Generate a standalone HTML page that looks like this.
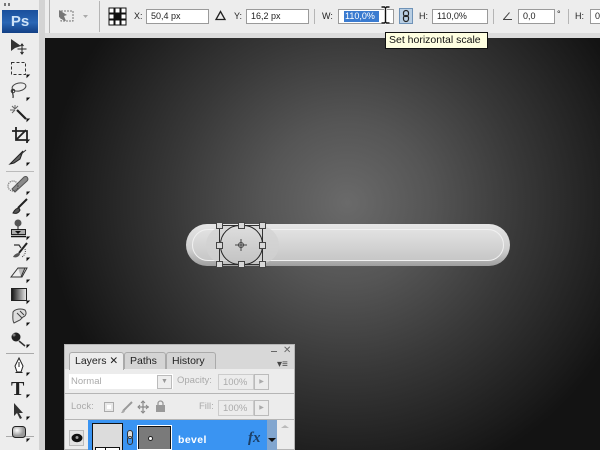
<!DOCTYPE html>
<html><head><meta charset="utf-8"><style>
html,body{margin:0;padding:0}
body{width:600px;height:450px;position:relative;overflow:hidden;background:#ececec;font-family:"Liberation Sans",sans-serif;font-size:9px;color:#222}
div,span{position:absolute;box-sizing:border-box}
svg{position:absolute;left:0;top:0}
.t{white-space:nowrap;line-height:12px}
.in{background:#fff;border:1px solid #9a9a9a;height:15px;top:9px;font-size:9px;line-height:13px;padding-left:4px;color:#222}
.sep{width:1px;background:#b5b5b5}
</style></head><body>
<!-- canvas -->
<div style="left:45px;top:38px;width:555px;height:412px;background:radial-gradient(ellipse 300px 290px at 302px 165px,#6a6a6a 0%,#555 28%,#383838 58%,#1c1c1c 90%,#131313 100%)"></div>
<!-- top bar -->
<div style="left:0;top:33px;width:600px;height:5px;background:#dcdcdc"></div>
<div style="left:39px;top:0;width:6px;height:450px;background:#d3d3d3"></div>
<div style="left:0;top:0;width:39px;height:450px;background:#ededed"></div>
<div style="left:45px;top:0;width:555px;height:33px;background:#ededed"></div>
<div class="sep" style="left:49px;top:0;height:33px"></div>
<div class="sep" style="left:99px;top:1px;height:31px"></div>
<div style="left:4px;top:3px;width:6px;height:3px;border-left:2px solid #777;border-right:2px solid #777"></div>
<!-- Ps logo -->
<div style="left:2px;top:10px;width:36px;height:23px;background:linear-gradient(#1a4f9c,#2a66b4 55%,#123f85);color:#cfe3f7;font-weight:bold;font-size:15px;line-height:23px;text-align:center">Ps</div>
<svg width="600" height="450" viewBox="0 0 600 450">
<!-- preset icon -->
<rect x="61" y="11" width="12" height="10" fill="none" stroke="#777" stroke-dasharray="2 1"/>
<path d="M59 10l8 5-3 1 2 5-3-1-4-3z" fill="#777"/>
<path d="M83 15l5 0-2.500 3z" fill="#aaa"/>
<!-- reference grid -->
<g fill="#fff" stroke="#111"><rect x="109" y="8" width="5" height="5"/><rect x="115" y="8" width="5" height="5"/><rect x="121" y="8" width="5" height="5"/><rect x="109" y="14" width="5" height="5"/><rect x="121" y="14" width="5" height="5"/><rect x="109" y="20" width="5" height="5"/><rect x="115" y="20" width="5" height="5"/><rect x="121" y="20" width="5" height="5"/><rect x="115" y="14" width="5" height="5" fill="#111"/></g>
<path d="M216 19.500h9l-4.500-8z" fill="none" stroke="#222" stroke-width="1.300"/>
<path d="M503 19.500h9M503.500 19.500l6-7" fill="none" stroke="#444" stroke-width="1"/>
<!-- link -->
<rect x="399.500" y="8.500" width="13" height="15" fill="#b9cfe4" stroke="#6f93b8"/>
<rect x="403.500" y="10.500" width="5" height="6" rx="2.500" fill="none" stroke="#222" stroke-width="1.200"/>
<rect x="403.500" y="15.500" width="5" height="6" rx="2.500" fill="none" stroke="#222" stroke-width="1.200"/>
<!-- tools -->
<g>
<path d="M11 39l0 12 4-3 6-2z" fill="#333"/>
<path d="M22 44v10M17.500 49h9M20.500 46l1.500-2 1.500 2M20.500 52l1.500 2 1.500-2" fill="none" stroke="#222"/>
<rect x="11.500" y="62.500" width="14" height="12" fill="none" stroke="#333" stroke-dasharray="3 2"/>
<path d="M29 75h-2v2zM29 98h-2v2zM29 119h-2v2zM29 140h-2v2zM29 163h-2v2zM29 192h-2v2zM29 214h-2v2zM29 237h-2v2zM29 258h-2v2zM29 280h-2v2zM29 301h-2v2zM29 323h-2v2zM29 345h-2v2zM29 373h-2v2zM29 395h-2v2zM29 417h-2v2zM29 439h-2v2z" fill="#111" stroke="#111"/>
<ellipse cx="19" cy="87" rx="7" ry="4" fill="none" stroke="#444" transform="rotate(-12 19 87)"/>
<path d="M13 89c-2 3 1 5 0 9" fill="none" stroke="#333" stroke-width="1.200"/>
<circle cx="13" cy="91" r="1.800" fill="none" stroke="#333"/>
<path d="M12 106l3 3M12 113l3-3M18 106l-3 3M10 110h5M15 105v4" stroke="#666"/>
<path d="M17 110l9 9" stroke="#222" stroke-width="2.200"/>
<path d="M12 131h15v12M16 127v13h11M16 140l10-10" fill="none" stroke="#222" stroke-width="1.800"/>
<path d="M10 164l13-13-3 8-6 4z" fill="#666" stroke="#222"/><path d="M20 155l6-5" stroke="#333"/>
<!-- divider -->
<path d="M6 171.500h28" stroke="#bbb"/>
<!-- heal -->
<path d="M12 189l12-12c3-2 5 2 3 4l-12 11z" fill="#8a8a8a" stroke="#555"/>
<circle cx="13" cy="186" r="5" fill="none" stroke="#444" stroke-dasharray="1 1"/>
<!-- brush -->
<path d="M27 199l-9 9" stroke="#222" stroke-width="2"/><path d="M19 208c-3 0-5 3-6 5 3 1 6 0 7-3z" fill="#555" stroke="#222"/>
<!-- stamp -->
<circle cx="18" cy="223" r="3.500" fill="#555"/><path d="M18 226v3M11.500 229.500h14v5h-14z" fill="#aaa" stroke="#222"/><path d="M15 231l3 3 3-3z" fill="#111"/><path d="M11 236.500h15" stroke="#111" stroke-width="1.500"/>
<!-- history brush -->
<path d="M27 243l-8 10" stroke="#222" stroke-width="2"/><path d="M19 253c-3 0-5 2-6 4 3 1 6 0 7-3z" fill="#555"/><path d="M14 245h5l2 3" fill="none" stroke="#333" stroke-width="1.200"/><path d="M25 249c1 3 0 6-3 8" fill="none" stroke="#444" stroke-dasharray="1 1"/>
<!-- eraser -->
<path d="M11 277l7-9h9l-5 9z" fill="#eee" stroke="#333"/><path d="M18 268l7 0-4 9" fill="#bbb" stroke="#333"/>
<!-- gradient -->
<defs><linearGradient id="g"><stop offset="0" stop-color="#111"/><stop offset="1" stop-color="#eee"/></linearGradient>
<radialGradient id="s" cx=".35" cy=".35"><stop offset="0" stop-color="#fff"/><stop offset="1" stop-color="#999"/></radialGradient></defs>
<rect x="11.500" y="288.500" width="15" height="12" fill="url(#g)" stroke="#222"/>
<!-- smudge -->
<path d="M13 312c2-3 8-4 12-2 2 3 1 6-2 7l-3 3-6 3c-2-3-1-7-1-11z" fill="#ddd" stroke="#444"/><path d="M17 313l5 5M20 311l4 4" stroke="#444"/>
<!-- sponge -->
<circle cx="16" cy="337" r="4.500" fill="#222"/><circle cx="14" cy="335" r="1.500" fill="#777"/><path d="M19 341l6 5" stroke="#333" stroke-width="1.500"/>
<path d="M6 353.500h28" stroke="#aaa"/>
<!-- pen -->
<path d="M19 358l4 8-2 6h-4l-2-6z" fill="#fff" stroke="#222"/><path d="M19 362v5M15.500 372.500h7" fill="none" stroke="#222"/>
<path d="M6 436.500h28" stroke="#aaa"/>
<!-- arrow -->
<path d="M14 403l0 13 3-3 3 6 2-1-3-5 4 0z" fill="#333"/>
<!-- shape -->
<rect x="12.500" y="426.500" width="13" height="11" rx="3" fill="url(#s)" stroke="#222"/>
</g>
<!-- bar -->
<defs><linearGradient id="b1" x1="0" y1="0" x2="0" y2="1"><stop offset="0" stop-color="#e6e6e6"/><stop offset=".6" stop-color="#cfcfcf"/><stop offset="1" stop-color="#9f9f9f"/></linearGradient>
<linearGradient id="b2" x1="0" y1="0" x2="0" y2="1"><stop offset="0" stop-color="#e2e2e2"/><stop offset="1" stop-color="#c6c6c6"/></linearGradient>
<linearGradient id="b3" x1="0" y1="0" x2="0" y2="1"><stop offset="0" stop-color="#dedede"/><stop offset="1" stop-color="#c2c2c2"/></linearGradient></defs>
<rect x="186" y="224" width="324" height="42" rx="21" fill="url(#b1)"/>
<rect x="192.500" y="229.500" width="311" height="31" rx="15.500" fill="url(#b2)" stroke="#f1f1f1" stroke-width="1"/>
<rect x="206" y="226" width="73" height="38" rx="19" fill="#d2d2d2" opacity=".7"/>
<!-- transform -->
<rect x="219.500" y="225.500" width="43" height="39" fill="none" stroke="#333"/>
<rect x="220.500" y="225.500" width="42" height="39" rx="19" fill="url(#b3)" stroke="#222" stroke-width="1"/>
<g fill="#d8d8d8" stroke="#444"><rect x="216.500" y="222.500" width="6" height="6"/><rect x="238.500" y="222.500" width="6" height="6"/><rect x="259.500" y="222.500" width="6" height="6"/><rect x="216.500" y="242.500" width="6" height="6"/><rect x="259.500" y="242.500" width="6" height="6"/><rect x="216.500" y="261.500" width="6" height="6"/><rect x="238.500" y="261.500" width="6" height="6"/><rect x="259.500" y="261.500" width="6" height="6"/></g>
<circle cx="241" cy="245" r="2.500" fill="none" stroke="#444"/><path d="M235 245h12M241 239v12" stroke="#444"/>
</svg>
<div style="left:11px;top:380px;font-family:'Liberation Serif',serif;font-weight:bold;font-size:20px;line-height:18px;color:#222">T</div>
<!-- toolbar text -->
<div class="t" style="left:134px;top:10px">X:</div>
<div class="in" style="left:146px;top:9px;width:63px">50,4 px</div>
<div class="t" style="left:234px;top:10px">Y:</div>
<div class="in" style="left:246px;top:9px;width:63px">16,2 px</div>
<div class="sep" style="left:314px;top:9px;height:15px"></div>
<div class="t" style="left:322px;top:10px">W:</div>
<div class="in" style="left:338px;top:9px;width:56px"></div>
<div style="left:344px;top:11px;width:35px;height:11px;background:#3a7bd0;color:#fff;font-size:9px;line-height:11px;padding-left:1px">110,0%</div>
<div class="t" style="left:419px;top:10px">H:</div>
<div class="in" style="left:432px;top:9px;width:56px">110,0%</div>
<div class="sep" style="left:493px;top:9px;height:15px"></div>
<div class="in" style="left:518px;top:9px;width:37px">0,0</div>
<div class="t" style="left:557px;top:8px">°</div>
<div class="sep" style="left:568px;top:9px;height:15px"></div>
<div class="t" style="left:575px;top:10px">H:</div>
<div class="in" style="left:590px;top:9px;width:20px">0</div>
<!-- I-beam -->
<svg width="600" height="450" viewBox="0 0 600 450">
<path d="M381.500 7h3l1 1 1-1h3M385.500 8v14M381.500 23h3l1-1 1 1h3" fill="none" stroke="#fff" stroke-width="3"/>
<path d="M381.500 7h3l1 1 1-1h3M385.500 8v14M381.500 23h3l1-1 1 1h3" fill="none" stroke="#111" stroke-width="1.400"/>
</svg>
<!-- tooltip -->
<div style="left:385px;top:32px;width:103px;height:17px;background:#ffffe1;border:1px solid #111;font-size:10.500px;line-height:15px;padding-left:3px;white-space:nowrap;color:#111">Set horizontal scale</div>
<!-- panel -->
<div style="left:64px;top:344px;width:231px;height:106px;background:#ececec;border:1px solid #b5b5b5"></div>
<div style="left:65px;top:345px;width:229px;height:24px;background:#d8d8d8"></div>
<div style="left:69px;top:352px;width:55px;height:18px;background:#ececec;border:1px solid #aaa;border-bottom:none;border-radius:3px 3px 0 0;font-size:10.500px;line-height:17px;padding-left:5px;color:#222">Layers ✕</div>
<div style="left:124px;top:352px;width:42px;height:17px;background:#d4d4d4;border:1px solid #aaa;border-bottom:none;border-radius:3px 3px 0 0;font-size:10.500px;line-height:16px;padding-left:5px;color:#222">Paths</div>
<div style="left:166px;top:352px;width:50px;height:17px;background:#d4d4d4;border:1px solid #aaa;border-bottom:none;border-radius:3px 3px 0 0;font-size:10.500px;line-height:16px;padding-left:5px;color:#222">History</div>
<div style="left:271px;top:351px;width:6px;height:1px;background:#666"></div>
<div class="t" style="left:283px;top:345px;font-size:10px;color:#666">✕</div>
<div class="t" style="left:277px;top:359px;font-size:10px;color:#444">▾≡</div>
<div style="left:69px;top:374px;width:104px;height:15px;background:#fff;font-size:9.500px;line-height:15px;padding-left:2px;color:#aaa">Normal</div>
<div style="left:157px;top:375px;width:15px;height:14px;border:1px solid #bbb;background:#eee;color:#999;font-size:7px;line-height:12px;text-align:center">▼</div>
<div class="t" style="left:177px;top:375px;font-size:9.500px;color:#aaa">Opacity:</div>
<div style="left:218px;top:374px;width:36px;height:16px;border:1px solid #ccc;font-size:9.500px;line-height:15px;padding-left:4px;color:#aaa">100%</div>
<div style="left:254px;top:374px;width:15px;height:16px;border:1px solid #bbb;font-size:6px;line-height:14px;text-align:center;color:#aaa">▶</div>
<div style="left:65px;top:393px;width:229px;height:1px;background:#b5b5b5"></div>
<div class="t" style="left:71px;top:401px;font-size:9.500px;color:#aaa">Lock:</div>
<svg width="600" height="450" viewBox="0 0 600 450">
<rect x="104.500" y="402.500" width="9" height="9" fill="#e8e8e8" stroke="#aaa"/><rect x="107" y="405" width="4" height="4" fill="#fff"/>
<path d="M123 411l9-9" stroke="#999" stroke-width="2"/><path d="M121 413c1-2 2-3 3-3l1 1c-1 2-2 2-4 2z" fill="#aaa"/>
<path d="M143 401v12M138 407h11" stroke="#888" stroke-width="1.200"/><path d="M141 403l2-2 2 2M141 411l2 2 2-2M140 405l-2 2 2 2M146 405l2 2-2 2" fill="none" stroke="#888"/>
<rect x="156" y="405" width="9" height="7" fill="#999"/><path d="M158 405v-1.500a2.500 2.500 0 0 1 5 0V405" fill="none" stroke="#999" stroke-width="1.300"/>
<!-- eye -->
<rect x="69.500" y="430.500" width="14" height="15" fill="#e4e4e4" stroke="#bbb"/>
<ellipse cx="77" cy="438" rx="5.500" ry="4.200" fill="#111"/><circle cx="77" cy="437.500" r="1.500" fill="#999"/>
</svg>
<div class="t" style="left:199px;top:401px;font-size:9.500px;color:#aaa">Fill:</div>
<div style="left:218px;top:400px;width:36px;height:16px;border:1px solid #ccc;font-size:9.500px;line-height:15px;padding-left:4px;color:#aaa">100%</div>
<div style="left:254px;top:400px;width:15px;height:16px;border:1px solid #bbb;font-size:6px;line-height:14px;text-align:center;color:#aaa">▶</div>
<div style="left:65px;top:419px;width:229px;height:1px;background:#b5b5b5"></div>
<!-- layer row -->
<div style="left:88px;top:420px;width:179px;height:30px;background:#3a94f2"></div>
<div style="left:267px;top:420px;width:10px;height:30px;background:#82a6cf"></div>
<div style="left:92px;top:423px;width:31px;height:27px;background:#dcdcdc;border:1px solid #111;border-bottom:none"></div>
<div style="left:95px;top:447px;width:25px;height:3px;background:#fff;border:1px solid #111;border-bottom:none"></div>
<div style="left:105px;top:447px;width:1px;height:3px;background:#111"></div>
<svg width="600" height="450" viewBox="0 0 600 450">
<rect x="127.500" y="430.500" width="5" height="8" rx="2.500" fill="#ddd" stroke="#333"/>
<rect x="127.500" y="436.500" width="5" height="8" rx="2.500" fill="none" stroke="#333"/>
<path d="M268 438h8l-4 4z" fill="#111"/>
<path d="M281 428h8l-4-3z" fill="#bbb"/>
</svg>
<div style="left:137px;top:425px;width:35px;height:25px;background:#7a7a7a;border:2px solid #111;border-bottom:none;outline:1px solid #fff;outline-offset:-1px"></div>
<div style="left:149px;top:437px;width:3px;height:3px;background:#fff;border-radius:50%;box-shadow:0 0 0 1px #222"></div>
<div class="t" style="left:178px;top:434px;font-size:10.500px;font-weight:bold;color:#fff;letter-spacing:.4px">bevel</div>
<div class="t" style="left:248px;top:432px;font-size:15px;font-weight:bold;font-style:italic;font-family:'Liberation Serif',serif;color:#1c3f66">fx</div>
</body></html>
